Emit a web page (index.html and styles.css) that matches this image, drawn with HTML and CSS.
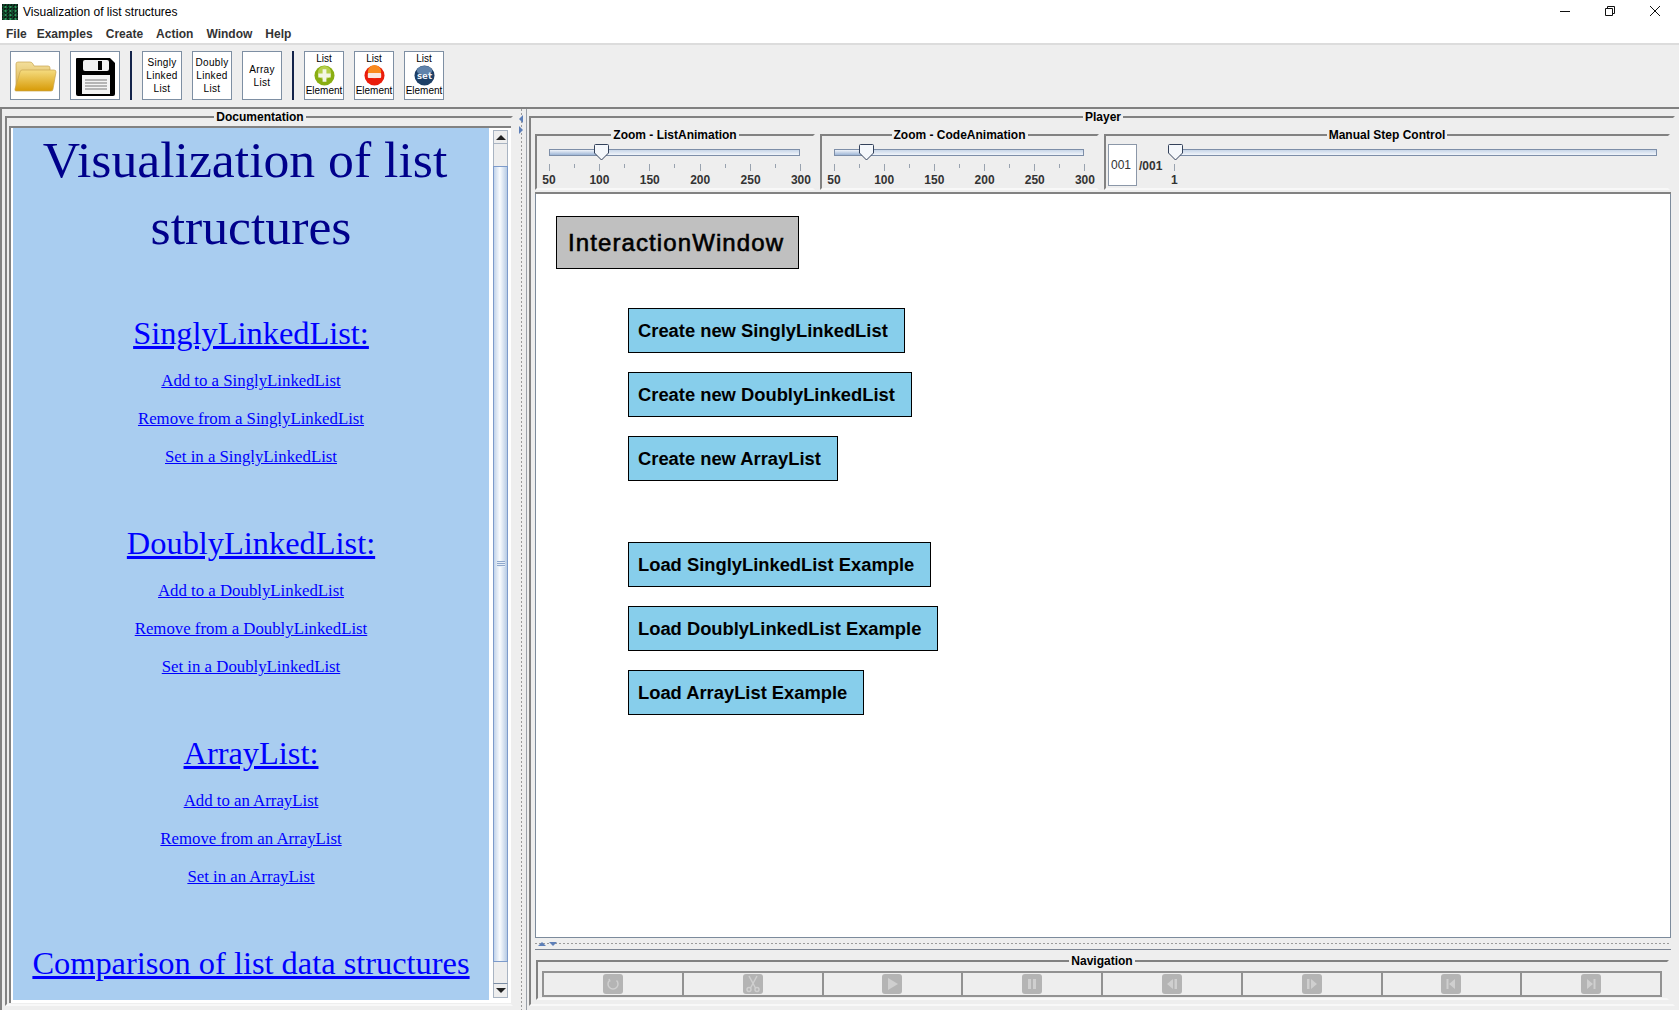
FILE: index.html
```html
<!DOCTYPE html>
<html lang="en">

<head>
    <meta charset="UTF-8">
    <title>Visualization of list structures</title>
    <link rel="stylesheet" href="styles.css">
</head>

<body>
    <div class="titlebar">
        <span class="app-icon"></span>
        <span class="app-title">Visualization of list structures</span>
        <div class="window-controls">
            <svg width="14" height="14" viewBox="0 0 14 14"><path d="M2 7.500h10" stroke="#111" fill="none"/></svg>
            <svg width="14" height="14" viewBox="0 0 14 14"><path d="M2.500 4.500h7v7h-7zM4.500 4.500v-2h7v7h-2" stroke="#111" fill="none"/></svg>
            <svg width="14" height="14" viewBox="0 0 14 14"><path d="M2 2l10 10M12 2L2 12" stroke="#111" fill="none"/></svg>
        </div>
    </div>

    <nav class="menubar">
        <span>File</span>
        <span>Examples</span>
        <span>Create</span>
        <span>Action</span>
        <span>Window</span>
        <span>Help</span>
    </nav>

    <div class="toolbar">
        <button class="tool tool-big">
            <svg width="44" height="34" viewBox="0 0 44 34">
                <defs>
                    <linearGradient id="folder-back" x1="0" y1="0" x2="0" y2="1">
                        <stop offset="0" stop-color="#f3df9c"/>
                        <stop offset="1" stop-color="#d9ae45"/>
                    </linearGradient>
                    <linearGradient id="folder-front" x1="0" y1="0" x2="0" y2="1">
                        <stop offset="0" stop-color="#f5dc80"/>
                        <stop offset="1" stop-color="#d79a06"/>
                    </linearGradient>
                </defs>
                <path d="M3 31V5q0-2 2-2h12q2 0 3 2l1 2h14q2 0 2 2v5H8L4 31z" fill="url(#folder-back)" stroke="#c9a54e" stroke-width=".7"/>
                <path d="M9 11h32q2 0 2 2l-3 17q0 2-2 2H3q-1.500 0-1-2l5-17q.5-2 2-2z" fill="url(#folder-front)" stroke="#c9a54e" stroke-width=".7"/>
            </svg>
        </button>
        <button class="tool tool-big">
            <svg width="40" height="40" viewBox="0 0 40 40">
                <path d="M2 2h33l5 5v31q0 2-2 2H3q-2 0-2-2V3q0-1 1-1z" fill="#000"/>
                <rect x="8" y="4" width="26" height="11" rx="2" fill="#f2f2f2"/>
                <rect x="23" y="5" width="4" height="9" fill="#000"/>
                <rect x="7" y="19" width="28" height="19" fill="#f4f4f4"/>
                <path d="M10 24h22M10 27h22M10 30h22M10 33h22" stroke="#777" fill="none"/>
            </svg>
        </button>
        <span class="tool-sep"></span>
        <button class="tool">Singly<br>Linked<br>List</button>
        <button class="tool">Doubly<br>Linked<br>List</button>
        <button class="tool">Array<br>List</button>
        <span class="tool-sep"></span>
        <button class="tool tool-element">
            List
            <svg width="21" height="21" viewBox="0 0 22 22">
                <circle cx="11" cy="11" r="10.500" fill="#8aae12"/>
                <circle cx="11" cy="8" r="7" fill="#b5cf4a"/>
                <path d="M9 4.500h4V9h4.500v4H13v4.500H9V13H4.500V9H9z" fill="#f4f6e6"/>
            </svg>
            Element
        </button>
        <button class="tool tool-element">
            List
            <svg width="21" height="21" viewBox="0 0 22 22">
                <circle cx="11" cy="11" r="10.500" fill="#ea1c0a"/>
                <circle cx="11" cy="7" r="7" fill="#f98a1c"/>
                <rect x="4" y="8.500" width="14" height="5" rx="1" fill="#fbe9e2"/>
            </svg>
            Element
        </button>
        <button class="tool tool-element">
            List
            <svg width="21" height="21" viewBox="0 0 22 22">
                <circle cx="11" cy="11" r="10.500" fill="#1d3f66"/>
                <ellipse cx="11" cy="6" rx="8" ry="5" fill="#5f83ab"/>
                <text x="11" y="14.500" class="set-text">set</text>
            </svg>
            Element
        </button>
    </div>

    <main class="workspace">
        <div class="left-pane">
            <fieldset class="etched doc-box">
                <legend>Documentation</legend>
                <div class="doc-frame">
                    <article class="doc-page">
                        <h1><span class="h1-first">Visualization of list</span> structures</h1>

                        <h2><a href="#">SinglyLinkedList:</a></h2>
                        <p><a href="#">Add to a SinglyLinkedList</a></p>
                        <p><a href="#">Remove from a SinglyLinkedList</a></p>
                        <p><a href="#">Set in a SinglyLinkedList</a></p>

                        <h2><a href="#">DoublyLinkedList:</a></h2>
                        <p><a href="#">Add to a DoublyLinkedList</a></p>
                        <p><a href="#">Remove from a DoublyLinkedList</a></p>
                        <p><a href="#">Set in a DoublyLinkedList</a></p>

                        <h2><a href="#">ArrayList:</a></h2>
                        <p><a href="#">Add to an ArrayList</a></p>
                        <p><a href="#">Remove from an ArrayList</a></p>
                        <p><a href="#">Set in an ArrayList</a></p>

                        <h2><a href="#">Comparison of list data structures</a></h2>
                    </article>
                    <div class="scrollbar">
                        <div class="scroll-btn"><span class="arrow-up"></span></div>
                        <div class="scroll-track"></div>
                        <div class="scroll-thumb"><span class="grip"></span></div>
                        <div class="scroll-track-end"></div>
                        <div class="scroll-btn scroll-btn-down"><span class="arrow-down"></span></div>
                    </div>
                </div>
            </fieldset>
        </div>

        <div class="splitter">
            <span class="tri-left"></span>
            <span class="tri-right"></span>
        </div>

        <div class="right-pane">
            <fieldset class="etched player-box">
                <legend>Player</legend>

                <div class="slider-row">
                    <fieldset class="etched slider-box zoom-list">
                        <legend>Zoom - ListAnimation</legend>
                        <div class="slider">
                            <div class="track">
                                <div class="track-fill" style="width: 52px"></div>
                                <svg class="thumb" style="left: 52px" width="15" height="17" viewBox="0 0 15 17"><path d="M1.500.5h12q1 0 1 1V9l-7 7-7-7V1.500q0-1 1-1z" fill="#f4f7fb" stroke="#33415a"/></svg>
                            </div>
                            <div class="ticks">
                                <i></i><i class="minor"></i><i></i><i class="minor"></i><i></i><i class="minor"></i><i></i><i class="minor"></i><i></i><i class="minor"></i><i></i>
                            </div>
                            <div class="tick-labels">
                                <span>50</span><span>100</span><span>150</span><span>200</span><span>250</span><span>300</span>
                            </div>
                        </div>
                    </fieldset>

                    <fieldset class="etched slider-box zoom-code">
                        <legend>Zoom - CodeAnimation</legend>
                        <div class="slider">
                            <div class="track">
                                <div class="track-fill" style="width: 32px"></div>
                                <svg class="thumb" style="left: 32px" width="15" height="17" viewBox="0 0 15 17"><path d="M1.500.5h12q1 0 1 1V9l-7 7-7-7V1.500q0-1 1-1z" fill="#f4f7fb" stroke="#33415a"/></svg>
                            </div>
                            <div class="ticks">
                                <i></i><i class="minor"></i><i></i><i class="minor"></i><i></i><i class="minor"></i><i></i><i class="minor"></i><i></i><i class="minor"></i><i></i>
                            </div>
                            <div class="tick-labels">
                                <span>50</span><span>100</span><span>150</span><span>200</span><span>250</span><span>300</span>
                            </div>
                        </div>
                    </fieldset>

                    <fieldset class="etched slider-box step-box">
                        <legend>Manual Step Control</legend>
                        <div class="step-row">
                            <span class="step-input">001</span>
                            <span class="step-total">/001</span>
                            <div class="slider step-slider">
                                <div class="track">
                                    <svg class="thumb" style="left: 0" width="15" height="17" viewBox="0 0 15 17"><path d="M1.500.5h12q1 0 1 1V9l-7 7-7-7V1.500q0-1 1-1z" fill="#f4f7fb" stroke="#33415a"/></svg>
                                </div>
                                <div class="ticks"><i></i></div>
                                <div class="tick-labels"><span>1</span></div>
                            </div>
                        </div>
                    </fieldset>
                </div>

                <div class="canvas-frame">
                    <div class="canvas">
                        <div class="canvas-title">InteractionWindow</div>
                        <div class="canvas-group">
                            <button class="canvas-btn">Create new SinglyLinkedList</button>
                            <button class="canvas-btn">Create new DoublyLinkedList</button>
                            <button class="canvas-btn">Create new ArrayList</button>
                        </div>
                        <div class="canvas-group">
                            <button class="canvas-btn">Load SinglyLinkedList Example</button>
                            <button class="canvas-btn">Load DoublyLinkedList Example</button>
                            <button class="canvas-btn">Load ArrayList Example</button>
                        </div>
                    </div>
                    <div class="h-splitter">
                        <span class="tri-up"></span>
                        <span class="tri-down"></span>
                    </div>
                </div>

                <fieldset class="etched nav-box">
                    <legend>Navigation</legend>
                    <div class="nav-row">
                        <div class="nav-cell"><svg class="nav-icon" viewBox="0 0 20 20"><path d="M6.500 6.500a5 5 0 1 0 7 0M6 5l1 2.500" /></svg></div>
                        <div class="nav-cell"><svg class="nav-icon" viewBox="0 0 20 20"><path d="M6 2l6.500 12M14 2L7.500 14" /><circle cx="6" cy="15.500" r="2"/><circle cx="14" cy="15.500" r="2"/></svg></div>
                        <div class="nav-cell"><svg class="nav-icon" viewBox="0 0 20 20"><path class="solid" d="M6 4l10 6-10 6z"/></svg></div>
                        <div class="nav-cell"><svg class="nav-icon" viewBox="0 0 20 20"><path class="solid" d="M6 5h3v10H6zM11 5h3v10h-3z"/></svg></div>
                        <div class="nav-cell"><svg class="nav-icon" viewBox="0 0 20 20"><path class="solid" d="M11 5v10l-6-5zM12.500 5H15v10h-2.500z"/></svg></div>
                        <div class="nav-cell"><svg class="nav-icon" viewBox="0 0 20 20"><path class="solid" d="M9 5v10l6-5zM5 5h2.500v10H5z"/></svg></div>
                        <div class="nav-cell"><svg class="nav-icon" viewBox="0 0 20 20"><path class="solid" d="M14 5v10l-6-5zM5.500 5h2v10h-2z"/></svg></div>
                        <div class="nav-cell"><svg class="nav-icon" viewBox="0 0 20 20"><path class="solid" d="M6 5v10l6-5zM12.500 5h2v10h-2z"/></svg></div>
                    </div>
                </fieldset>
            </fieldset>
        </div>
    </main>
</body>

</html>
```

FILE: styles.css
```css
* {
    box-sizing: border-box;
}

html,
body {
    margin: 0;
    height: 1010px;
    overflow: hidden;
}

body {
    display: flex;
    flex-direction: column;
    font-family: "Liberation Sans", Arial, sans-serif;
    background-color: #eeeeee;
    color: #000;
}

/* window chrome */

.titlebar {
    display: flex;
    align-items: center;
    height: 22px;
    padding-left: 2px;
    padding-top: 2px;
    background-color: #fff;
    font-size: 12px;
}

.app-icon {
    width: 16px;
    height: 16px;
    margin-right: 5px;
    background:
        radial-gradient(circle, #2f9a5c 0 1px, transparent 1.2px) 1px 1px / 5px 4px,
        repeating-conic-gradient(#0e4a2c 0 25%, #121a16 0 50%) 0 0 / 3px 3px;
}

.window-controls {
    display: flex;
    gap: 31px;
    margin-left: auto;
    margin-right: 17px;
    margin-top: -3px;
}

.menubar {
    display: flex;
    align-items: center;
    gap: 13px;
    height: 23px;
    padding: 2px 0 0 6px;
    background-color: #fff;
    border-bottom: 2px solid #dcdcdc;
    font-size: 12px;
    font-weight: bold;
    color: #333;
}

.menubar span:first-child {
    margin-right: -3px;
}

.toolbar {
    display: flex;
    gap: 10px;
    height: 62px;
    padding: 6px 0 0 10px;
}

.tool {
    display: flex;
    align-items: center;
    justify-content: center;
    width: 40px;
    height: 49px;
    padding: 0;
    background-color: #fff;
    border: 1px solid #7e8fa3;
    font-family: "Liberation Sans", Arial, sans-serif;
    font-size: 10px;
    letter-spacing: .3px;
    line-height: 13px;
    color: #000;
    text-align: center;
}

.tool-big {
    width: 50px;
}

.tool-element {
    flex-direction: column;
    justify-content: flex-start;
    padding-top: 2px;
    line-height: 10px;
    letter-spacing: 0;
}

.tool-element svg {
    margin: 1px 0 0;
}

.set-text {
    font-family: "DejaVu Sans", sans-serif;
    font-size: 9px;
    font-weight: bold;
    fill: #eef3f8;
    text-anchor: middle;
}

.tool-sep {
    width: 2px;
    height: 49px;
    background-color: #13234a;
}

/* main split */

.workspace {
    display: flex;
    flex: 1;
    min-height: 0;
    border-top: 2px solid #808080;
}

.left-pane {
    width: 518px;
    padding: 0 5px 4px 3px;
    border-left: 2px solid #828282;
}

.etched {
    min-width: 0;
    margin: 0;
    padding: 0;
    border: 2px solid #828282;
    border-right-color: #eee;
    border-bottom-color: #f8f8f8;
}

.etched legend {
    margin: 0 auto;
    padding: 1px 2px 0;
    font-size: 12px;
    line-height: 14px;
    font-weight: bold;
    color: #000;
}

.doc-box {
    height: 100%;
    padding: 2px 0 0 2px;
}

.doc-frame {
    display: flex;
    height: 877px;
    padding: 0 2px 3px 2px;
    background-color: #fff;
    border-top: 2px solid #828282;
    border-left: 2px solid #828282;
}

.doc-page {
    width: 476px;
    background-color: #a9cdf0;
    font-family: "Liberation Serif", "Times New Roman", serif;
    text-align: center;
}

.doc-page h1 {
    margin: -2px 0 0;
    font-size: 51.7px;
    line-height: 67px;
    font-weight: normal;
    color: #00008b;
}

.h1-first {
    display: block;
    padding-right: 12px;
}

.doc-page h2 {
    margin: 47px 0 9px;
    font-size: 32.4px;
    line-height: 40px;
    font-weight: normal;
}

.doc-page h1 + h2 {
    margin-top: 53px;
}

.doc-page p {
    margin: 0;
    font-size: 16.8px;
    line-height: 38px;
}

.doc-page a {
    color: #0000ff;
}

/* fake scrollbar */

.scrollbar {
    display: flex;
    flex-direction: column;
    width: 15px;
    margin-left: 4px;
    padding: 2px 0;
}

.scroll-btn {
    display: flex;
    align-items: center;
    justify-content: center;
    height: 13px;
    flex: none;
    background-color: #eee;
    border: 1px solid #a9b4c2;
    border-bottom: 0;
}

.scroll-btn-down {
    height: 15px;
    border-top: 1px solid #7a8ca3;
    border-bottom: 1px solid #a9b4c2;
}

.arrow-up {
    border: 5px solid transparent;
    border-top: 0;
    border-bottom: 5px solid #222;
}

.arrow-down {
    border: 5px solid transparent;
    border-bottom: 0;
    border-top: 5px solid #222;
}

.scroll-track {
    height: 23px;
    flex: none;
    background-color: #eee;
    border: 1px solid #a9b4c2;
    border-bottom: 0;
}

.scroll-track-end {
    height: 21px;
    flex: none;
    background-color: #eee;
    border: 1px solid #a9b4c2;
    border-top: 0;
    border-bottom: 0;
}

.scroll-thumb {
    display: flex;
    flex: 1;
    align-items: center;
    justify-content: center;
    background: linear-gradient(90deg, #c3d4ea, #fafcfe 45%, #b7cbe4);
    border: 1px solid #7d9bcb;
}

.grip {
    width: 8px;
    height: 6px;
    background: repeating-linear-gradient(#8fa8cc 0 1px, #e6eef8 1px 2px);
}

.splitter {
    display: flex;
    flex-direction: column;
    align-items: center;
    width: 9px;
    padding: 6px 2px 0 0;
    background: linear-gradient(#9a9a9a 50%, transparent 50%) 3px 0 / 1px 4px repeat-y;
    border-right: 1px solid #9aa0a8;
}

.tri-left,
.tri-right {
    margin-bottom: 3px;
    border: 4px solid transparent;
    border-left-width: 0;
    border-right: 4px solid #5d7fb8;
}

.tri-right {
    border-right: 0;
    border-left: 4px solid #5d7fb8;
}

.right-pane {
    flex: 1;
    min-width: 0;
    padding: 0 4px 4px 2px;
}

.player-box {
    display: flex;
    flex-direction: column;
    height: 100%;
    padding: 0 2px 0 4px;
}

.slider-row {
    display: flex;
    gap: 5px;
    height: 63px;
    flex: none;
    margin-top: 3px;
    padding-right: 1px;
}

.slider-box {
    height: 63px;
    flex: none;
}

.zoom-list {
    width: 280px;
}

.zoom-code {
    width: 279px;
}

.step-box {
    flex: 1;
}

.slider {
    padding: 7px 12px 0 12px;
}

.track {
    position: relative;
    height: 7px;
    margin-right: 1px;
    background: linear-gradient(#c7d5e8, #f1f5fa);
    border: 1px solid #7d8ea8;
}

.track-fill {
    height: 100%;
    background: linear-gradient(#f0f4fa, #9db5d6);
}

.thumb {
    position: absolute;
    top: -6px;
    margin-left: -8px;
}

.ticks {
    display: flex;
    justify-content: space-between;
    align-items: flex-start;
    height: 7px;
    margin-top: 8px;
}

.ticks i {
    width: 1px;
    height: 7px;
    background-color: #98a2af;
}

.ticks i.minor {
    height: 4px;
}

.tick-labels {
    display: flex;
    justify-content: space-between;
    margin-top: 2px;
    font-size: 12px;
    line-height: 14px;
    font-weight: bold;
    color: #333;
}

.tick-labels span {
    display: flex;
    justify-content: center;
    width: 0;
}

.step-row {
    display: flex;
    align-items: flex-start;
    padding-left: 2px;
}

.step-input {
    width: 29px;
    height: 42px;
    margin-top: 2px;
    padding-left: 2px;
    background-color: #fff;
    border: 1px solid #8b97a8;
    font-size: 12px;
    line-height: 40px;
    color: #333;
}

.step-total {
    margin-left: 2px;
    padding-top: 17px;
    font-size: 12px;
    line-height: 14px;
    font-weight: bold;
    color: #333;
}

.step-slider {
    flex: 1;
    padding: 7px 10px 0 12px;
}

.step-slider .ticks,
.step-slider .tick-labels {
    justify-content: flex-start;
}

.step-slider .thumb {
    margin-left: -7px;
}

/* animation area */

.canvas-frame {
    display: flex;
    flex-direction: column;
    height: 758px;
    flex: none;
    margin-top: 2px;
    border-top: 2px solid #828282;
    border-bottom: 1px solid #7c8593;
}

.canvas {
    flex: 1;
    padding: 22px 0 0 20px;
    background-color: #fff;
    border-left: 1px solid #7c8b9c;
    border-right: 1px solid #7c8b9c;
    border-bottom: 1px solid #7c8b9c;
}

.canvas-title {
    display: flex;
    align-items: center;
    width: 243px;
    height: 53px;
    padding-left: 11px;
    background-color: #c0c0c0;
    border: 1px solid #000;
    font-size: 24px;
    letter-spacing: 1.1px;
    -webkit-text-stroke: .6px #000;
}

.canvas-group {
    display: flex;
    flex-direction: column;
    align-items: flex-start;
    gap: 19px;
    margin-top: 61px;
    margin-left: 72px;
}

.canvas-group:nth-child(2) {
    margin-top: 39px;
}

.canvas-btn {
    height: 45px;
    padding: 1px 16px 0 9px;
    background-color: #87ceeb;
    border: 1px solid #000;
    font-family: "Liberation Sans", Arial, sans-serif;
    font-size: 18.35px;
    font-weight: bold;
    color: #000;
}

.h-splitter {
    display: flex;
    align-items: center;
    gap: 3px;
    height: 11px;
    padding-left: 3px;
    background: linear-gradient(90deg, #9a9a9a 50%, transparent 50%) 0 5px / 4px 1px repeat-x;
}

.tri-up {
    border: 4px solid transparent;
    border-top: 0;
    border-bottom: 4px solid #5d7fb8;
}

.tri-down {
    border: 4px solid transparent;
    border-bottom: 0;
    border-top: 4px solid #5d7fb8;
}

.nav-box {
    flex: none;
    height: 47px;
    margin: 3px 2px 0 1px;
    padding: 3px 5px 0 4px;
}

.nav-row {
    display: flex;
    height: 26px;
    border: 2px solid #929292;
    border-left-width: 1px;
}

.nav-cell {
    display: flex;
    flex: 1;
    align-items: center;
    justify-content: center;
    border-left: 1px solid #929292;
}

.nav-cell:not(:first-child) {
    border-left-width: 2px;
}

.nav-icon {
    width: 20px;
    height: 20px;
    background-color: #b4b4b4;
    border-radius: 3px;
    fill: none;
    stroke: #cfcfcf;
    stroke-width: 1.500;
}

.nav-icon .solid {
    fill: #cfcfcf;
    stroke: none;
}
```
